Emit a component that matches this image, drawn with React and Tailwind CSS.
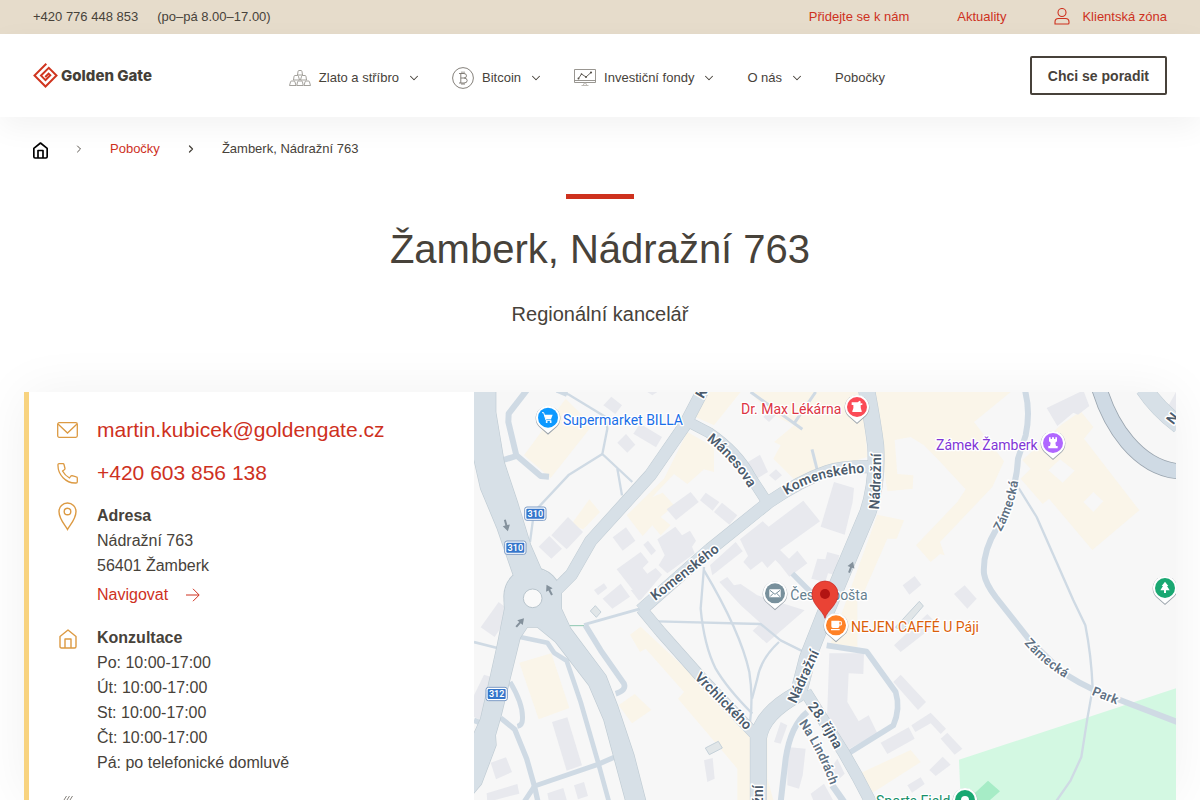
import { ChevronDown, ChevronRight } from "lucide-react";

const MAJOR_ROADS = [
  { d: "M250 590 L292 548 L350 447 L465 320 L530 248 L632 100 L684 0", w: 36 },
  { d: "M640 88 L705 122 Q790 180 830 255 L882 335", w: 30 },
  { d: "M500 655 L708 472 L885 330 Q980 265 1060 238 Q1110 222 1200 225", w: 36 },
  { d: "M502 650 L560 720 L680 855 L842 1026", w: 32 },
  { d: "M995 900 L1108 1080 L1150 1154 L1190 1230", w: 34 },
  { d: "M1178 -5 Q1196 90 1205 160 Q1212 270 1182 360 L1108 535 Q1050 670 1000 800 L973 905 Q862 965 853 1040 L853 1230", w: 48 },
  { d: "M2010 -10 Q2050 50 2116 100", w: 50 },
];

const ROAD_SHAPES = [
  "M-5 -5 H65 V60 L90 210 L130 330 L170 460 L205 540 L237 556 L262 600 V650 L290 710 L395 850 L430 940 L480 1090 L516 1230 H456 L390 985 L345 880 L245 750 L190 705 H160 L138 738 L108 860 L80 975 L64 1030 L66 1060 L22 1176 L-5 1208 V1036 L20 980 L50 850 L70 760 L92 650 Q85 590 120 555 L70 410 L20 290 L-5 180 Z",
];

const MINOR_ROADS = [
  { d: "M158 -5 L104 65 L103 90 L127 190 L200 252 L225 254", w: 18 },
  { d: "M88 204 L127 192", w: 18 },
  { d: "M240 -5 L285 8 L395 75 L400 110 L385 186 L475 270", w: 7 },
  { d: "M385 186 L285 248 L180 360 L168 450", w: 7 },
  { d: "M430 230 L444 310", w: 7 },
  { d: "M250 -8 L280 5", w: 20 },
  { d: "M330 698 L500 650", w: 9 },
  { d: "M334 700 L380 775 L450 875 Q458 895 425 905", w: 17 },
  { d: "M550 688 L860 696 L920 745 L1000 785", w: 7 },
  { d: "M690 525 L680 650 Q690 760 725 830 Q760 890 835 965", w: 7 },
  { d: "M690 535 Q800 720 826 840 Q838 920 828 990", w: 7 },
  { d: "M915 750 Q860 800 850 860 L834 920", w: 7 },
  { d: "M0 750 L70 768", w: 8 },
  { d: "M138 735 L220 752 L240 782 L278 806 L320 930 L372 1110 L405 1230", w: 14 },
  { d: "M108 870 Q150 940 145 985 Q145 1000 130 1003", w: 15 },
  { d: "M0 985 L18 992 M80 978 L122 1012 L158 1100 L182 1185 L192 1230", w: 16 },
  { d: "M150 1230 L182 1182 L372 1117 L425 1094", w: 15 },
  { d: "M1058 760 L1178 779 L1265 900 Q1280 950 1258 1000 L1123 1084", w: 17 },
  { d: "M1000 960 Q950 1000 935 1100 L920 1230", w: 18 },
  { d: "M1075 1180 L1110 1230", w: 20 },
  { d: "M955 545 L1010 600", w: 16 },
  { d: "M830 0 L985 112 M962 92 L1025 0", w: 9 },
  { d: "M1014 172 L1030 235", w: 9 },
  { d: "M1653 -5 Q1670 60 1655 130 L1632 200 Q1628 300 1568 410 Q1525 480 1530 545 Q1535 575 1565 615 L1663 739 Q1730 810 1778 849 Q1850 895 1938 924 L2110 990", w: 18 },
  { d: "M1634 288 L1688 375 L1798 625 L1834 700 Q1852 790 1856 890 L1840 980 L1822 1095 L1790 1165 L1745 1230", w: 7 },
];

const BUILDINGS = [
  "388,40 412,14 444,40 424,66",
  "430,152 456,126 484,158 460,182",
  "478,125 498,95 564,135 546,166",
  "520,0 535,10 550,0",
  "232,430 282,375 327,420 278,472",
  "194,464 226,432 264,470 232,500",
  "578,352 650,300 674,330 606,384",
  "678,325 695,302 736,330 716,356",
  "720,360 744,332 790,370 766,398",
  "416,436 456,406 484,446 446,476",
  "508,458 522,446 546,476 532,490",
  "550,442 604,404 624,430 648,416 666,446 654,464 662,484 580,544 554,520 572,490",
  "428,532 500,480 524,510 506,528 520,545 545,528 564,548 500,624",
  "360,594 390,574 400,588 372,610",
  "386,620 440,575 468,614 415,650",
  "470,594 525,590 495,626",
  "20,706 74,630 112,660 62,735",
  "0,910 30,848 62,858 20,985 0,975",
  "234,990 280,976 324,1120 278,1136",
  "50,1112 96,1096 114,1140 66,1162",
  "38,1204 130,1176 136,1205 40,1230",
  "220,1204 268,1188 280,1230 225,1230",
  "300,1180 330,1170 342,1212 312,1222",
  "690,1105 716,1098 722,1160 700,1170",
  "822,210 858,188 882,240 845,262",
  "885,250 906,232 924,250 904,266",
  "868,75 895,45 915,60 885,90",
  "798,442 866,388 884,404 988,326 1038,388 918,474 945,500 970,476 1000,514 946,554 918,518 904,504 880,528 864,508 830,534 808,510 822,492",
  "1080,270 1140,288 1136,330 1112,428 1040,404",
  "1012,560 1030,500 1054,502 1060,480 1096,490 1082,548 1062,544 1054,570",
  "708,520 785,450 806,478 715,550",
  "736,570 760,555 780,580 800,576 850,610 992,655 878,754 836,716 860,694 800,640",
  "1066,784 1170,784 1168,846 1124,844 1120,930 1154,988 1184,970 1210,1024 1120,1074 1058,1006",
  "1258,870 1280,848 1356,930 1332,954",
  "1220,1052 1304,1006 1322,1040 1240,1086",
  "1312,1000 1370,962 1416,1010 1400,1026 1370,994 1324,1020",
  "1400,1040 1420,1022 1465,1070 1442,1088",
  "1366,1134 1406,1094 1430,1118 1385,1152",
  "1300,1180 1340,1156 1352,1176 1314,1202",
  "1260,760 1360,666 1388,695 1280,780",
  "1286,580 1322,552 1342,578 1306,608",
  "900,1050 920,990 940,1000 920,1055",
  "940,1065 995,1070 986,1150 975,1190 940,1180",
  "1060,1145 1090,1100 1112,1145 1086,1170",
  "1010,1205 1050,1175 1080,1230 1020,1230",
  "1440,606 1472,580 1508,620 1480,650",
  "1718,48 1828,-5 1846,42 1812,68 1798,62 1750,102",
  "2084,40 2106,0 2106,60",
];

const SHOPS = [
  "150,190 275,20 355,100 230,258",
  "290,400 346,322 378,360 328,412",
  "458,370 570,260 640,120 720,165 720,240 690,232 640,276 600,246 534,316 566,302 600,340 560,375 590,400 560,430 535,400 506,432",
  "664,75 690,0 830,0 880,60 960,100 900,150 920,160 898,200 960,262 1100,220 1180,195 1165,0 800,0 720,100",
  "1195,0 1610,0 1500,90 1590,208 1555,285 1398,450 1412,490 1398,486 1370,510 1326,460 1450,330 1475,292 1390,200 1350,160 1310,135 1262,144 1270,246 1318,250 1316,290 1240,298",
  "1210,368 1290,385 1268,440 1240,440 1170,600 1128,600 1150,620 1150,765 1070,755",
  "1640,260 1670,230 1645,205 1760,100 1820,58 1858,105 1830,140 1996,355 1855,474 1725,320 1706,336",
  "136,812 232,784 286,948 194,982",
  "468,728 500,704 850,1030 880,1034 880,1160 900,1230 790,1230 790,1130 690,1012 612,920 630,900 515,770 498,780",
  "434,940 482,906 532,954 474,994",
  "1155,1145 1310,1074 1340,1110 1190,1206",
];

// text paths for street names, so the letters follow the road
const STREETS = [
  { id: "st-komenskeho-1", name: "Komenského", d: "M544 627 L780 443" },
  { id: "st-komenskeho-2", name: "Komenského", d: "M938 310 Q1040 244 1190 242" },
  { id: "st-manesova", name: "Mánesova", d: "M697 144 Q776 205 826 290" },
  { id: "st-nadrazni-1", name: "Nádražní", d: "M1214 353 Q1222 280 1221 160" },
  { id: "st-nadrazni-2", name: "Nádražní", d: "M966 936 L1046 760" },
  { id: "st-nadrazni-3", name: "žní", d: "M866 1236 V1120" },
  { id: "st-vrchlickeho", name: "Vrchlického", d: "M660 858 L838 1038" },
  { id: "st-rijna", name: "28. října", d: "M1000 944 Q1052 1008 1095 1100" },
  { id: "st-lindrach", name: "Na Lindrách", d: "M974 994 Q1036 1082 1076 1200", thin: true },
  { id: "st-zamecka-1", name: "Zámecká", d: "M1580 420 Q1626 340 1636 240", thin: true },
  { id: "st-zamecka-2", name: "Zámecká", d: "M1650 754 Q1710 825 1810 880", thin: true },
  { id: "st-park", name: "Park", d: "M1852 908 L1970 954", thin: true },
  { id: "st-top", name: "K", d: "M688 22 L728 -48" },
  { id: "st-right", name: "N", d: "M2098 100 L2190 -20" },
];

const PLACES = [
  { name: "Supermarket BILLA", x: 267, y: 98, px: 222, py: 77, color: "#1a6fe8", pin: "#0d99ff", icon: "cart" },
  { name: "Dr. Max Lékárna", x: 801, y: 66, px: 1149, py: 45, color: "#dc3543", pin: "#fb4b57", icon: "pharmacy" },
  { name: "Zámek Žamberk", x: 1386, y: 174, px: 1737, py: 153, color: "#8136d6", pin: "#b067ff", icon: "castle" },
  { name: "Česká pošta", x: 949, y: 624, px: 903, py: 604, color: "#65808f", pin: "#78909c", icon: "mail" },
  { name: "NEJEN CAFFÉ U Páji", x: 1131, y: 720, px: 1086, py: 700, color: "#db5f0b", pin: "#ff8126", icon: "cup" },
  { name: "Sports Field", x: 1206, y: 1243, px: 1473, py: 1224, color: "#15906a", pin: "#1aa872", icon: "dot" },
  { name: "", x: 0, y: 0, px: 2073, py: 588, color: "#15906a", pin: "#1aa872", icon: "tree" },
];

const SHIELDS = [
  { label: "310", x: 152, y: 345 },
  { label: "310", x: 92, y: 447 },
  { label: "312", x: 36, y: 886 },
];

const ARROWS = [
  "translate(97 400) rotate(165)",
  "translate(226 594) rotate(-28)",
  "translate(138 692) rotate(42)",
  "translate(1131 526) rotate(20)",
];

const HOURS = [
  "Po: 10:00-17:00",
  "Út: 10:00-17:00",
  "St: 10:00-17:00",
  "Čt: 10:00-17:00",
  "Pá: po telefonické domluvě",
];

function PlaceIcon({ name }) {
  switch (name) {
    case "cart":
      return (
        <>
          <path d="M-12 -9 H14 L9 5 H-6 Z" fill="#fff" />
          <path d="M-18 -15 H-13 L-6 8 H10" fill="none" stroke="#fff" strokeWidth="3" />
          <circle cx="-4" cy="13" r="3" fill="#fff" />
          <circle cx="8" cy="13" r="3" fill="#fff" />
        </>
      );
    case "pharmacy":
      return <path d="M-16 -14 H2 L8 -19 L12 -15 L9 -11 H16 V-6 H11 Q10 4 14 12 V15 H-14 V12 Q-9 4 -11 -6 H-16 Z" fill="#fff" />;
    case "castle":
      return <path d="M-12 -17 H-7 V-12 H-3 V-17 H3 V-12 H7 V-17 H12 V-5 L7 -1 L9 9 H14 V16 H-14 V9 H-9 L-7 -1 L-12 -5 Z" fill="#fff" />;
    case "mail":
      return (
        <>
          <rect x="-17" y="-12" width="34" height="24" rx="2" fill="#fff" />
          <path d="M-15 -9 L0 3 L15 -9 M-15 10 L-5 0 M15 10 L5 0" fill="none" stroke="#78909c" strokeWidth="3" />
        </>
      );
    case "cup":
      return (
        <>
          <path d="M-14 -14 H10 V3 Q10 8 5 8 H-9 Q-14 8 -14 3 Z M-15 11 H11 V15 H-15 Z" fill="#fff" />
          <path d="M9 -11 H16 V-1 H9" fill="none" stroke="#fff" strokeWidth="3" />
        </>
      );
    case "tree":
      return <path d="M0 -19 L10 -6 H6 L14 7 H3 V15 H-3 V7 H-14 L-6 -6 H-10 Z" fill="#fff" />;
    default:
      return <circle r="12" fill="#fff" />;
  }
}

function BranchMap() {
  return (
    <svg
      className="block h-full w-full"
      viewBox="0 0 2106 1224"
      preserveAspectRatio="xMinYMin slice"
      role="img"
      aria-label="Mapa pobočky"
    >
      <rect width="2106" height="1224" fill="#f7f7f7" />
      <g fill="#faf5e9">
        {SHOPS.map((p) => (
          <polygon key={p} points={p} />
        ))}
      </g>
      <g fill="#f7f7f7">
        <path d="M1723 235 L1758 202 L1802 236 L1766 272 Z M1828 330 L1858 300 L1888 328 L1858 360 Z" />
      </g>
      <path d="M1455 1103 L2106 889 V1224 H1460 Z" fill="#d3f8e2" />
      <path d="M1500 1205 L1542 1166 L1578 1198 L1548 1224 H1500 Z" fill="#a6ecc6" />
      <g fill="#e8e9ee">
        {BUILDINGS.map((p) => (
          <polygon key={p} points={p} />
        ))}
      </g>
      <g fill="#e1e6e8" stroke="#c5d1d9" strokeWidth="3">
        <path d="M349 657 L364 641 L381 660 L367 676 Z M694 1068 L733 1048 L745 1068 L706 1088 Z M1264 706 L1336 628 L1348 642 L1284 716 Z" />
      </g>
      <g fill="none" stroke="#cfdae4" strokeLinejoin="round">
        {MINOR_ROADS.map((r) => (
          <path key={r.d} d={r.d} strokeWidth={r.w} />
        ))}
      </g>
      <path d="M282 701 H330" stroke="#8cc7b0" strokeWidth="3" />
      <g fill="none" stroke="#c0ccd4" strokeLinejoin="round">
        {MAJOR_ROADS.map((r) => (
          <path key={r.d} d={r.d} strokeWidth={r.w + 3} />
        ))}
        {ROAD_SHAPES.map((d) => (
          <path key={d} d={d} strokeWidth="4" />
        ))}
        <circle cx="176" cy="613" r="86" strokeWidth="4" />
      </g>
      <g fill="none" stroke="#d7e0e7" strokeLinejoin="round">
        {MAJOR_ROADS.map((r) => (
          <path key={r.d} d={r.d} strokeWidth={r.w} />
        ))}
      </g>
      <g fill="#d7e0e7">
        {ROAD_SHAPES.map((d) => (
          <path key={d} d={d} />
        ))}
        <circle cx="176" cy="613" r="85" />
      </g>
      <circle cx="176" cy="619" r="28" fill="#f9f9f9" stroke="#b9c5cd" strokeWidth="3" />

      <path d="M1876 -10 Q1905 85 1960 150 Q2030 232 2116 238" fill="none" stroke="#9aa5af" strokeWidth="48" />
      <path d="M1876 -10 Q1905 85 1960 150 Q2030 232 2116 238" fill="none" stroke="#cfdae4" strokeWidth="43" />

      <g fill="#84919c">
        {ARROWS.map((t) => (
          <path key={t} transform={t} d="M0 -18 L11 0 H3 V17 H-3 V0 H-11 Z" />
        ))}
      </g>

      <defs>
        {STREETS.map((s) => (
          <path key={s.id} id={s.id} d={s.d} />
        ))}
      </defs>
      <g fontFamily="Roboto, sans-serif" paintOrder="stroke" stroke="#fff" strokeWidth="9" strokeLinejoin="round">
        {STREETS.map((s) => (
          <text
            key={s.id}
            fontSize={s.thin ? 39 : 42}
            fontWeight="600"
            fill={s.thin ? "#5f7183" : "#4b5b6c"}
          >
            <textPath href={`#${s.id}`}>{s.name}</textPath>
          </text>
        ))}
      </g>

      {SHIELDS.map((s) => (
        <g key={`${s.x}-${s.y}`}>
          <rect x={s.x} y={s.y} width="64" height="40" rx="7" fill="#fff" stroke="#7d9cc6" strokeWidth="3" />
          <rect x={s.x + 5} y={s.y + 5} width="54" height="30" rx="3" fill="#3576cb" />
          <text x={s.x + 32} y={s.y + 30} textAnchor="middle" fontSize="27" fontWeight="600" fontFamily="Roboto, sans-serif" fill="#fff">
            {s.label}
          </text>
        </g>
      ))}

      {PLACES.map((p) => (
        <g key={p.icon} fontFamily="Roboto, sans-serif" fontSize="42">
          <text x={p.x} y={p.y} fill={p.color} stroke="#fff" strokeWidth="8" strokeLinejoin="round" paintOrder="stroke">
            {p.name}
          </text>
          <g transform={`translate(${p.px} ${p.py})`}>
            <path d="M0 51 L-27 27 A37 37 0 1 1 27 27 Z" fill="#9aa3ab" />
            <path d="M0 47 L-26 25 A36 36 0 1 1 26 25 Z" fill="#fff" />
            <circle r="30" fill={p.pin} />
            <PlaceIcon name={p.icon} />
          </g>
        </g>
      ))}

      <path
        d="M1053 679 C1047 655 1014 640 1014 606 A39 39 0 1 1 1092 606 C1092 640 1059 655 1053 679 Z"
        fill="#ea4335"
        stroke="#c5221f"
        strokeWidth="2"
      />
      <circle cx="1053" cy="606" r="15" fill="#b31412" />
    </svg>
  );
}

function GoldIcon() {
  return (
    <svg width="22" height="16" viewBox="0 0 22 16" fill="none" stroke="#8d8a84" strokeWidth=".8" strokeLinejoin="round">
      <path d="M8.5 5 L9 1.5 Q9.2 .5 10 .5 H12 Q12.800 .5 13 1.500 L13.500 5 Z" />
      <path d="M4.500 10 L5 6.500 Q5.200 5.500 6 5.500 H8.500 Q9.300 5.500 9.500 6.500 L10.500 10 Z M11.500 10 L12.500 6.500 Q12.700 5.500 13.500 5.500 H16 Q16.800 5.500 17 6.500 L17.500 10 Z" />
      <path d="M.5 15.500 L1.500 12 Q1.700 11 2.500 11 H5 Q5.800 11 6 12 L7 15.500 Z M7.800 15.500 L8.500 12 Q8.700 11 9.500 11 H12.500 Q13.300 11 13.500 12 L14.200 15.500 Z M15 15.500 L16 12 Q16.200 11 17 11 H19.500 Q20.300 11 20.500 12 L21.500 15.500 Z" />
    </svg>
  );
}

function BitcoinIcon() {
  return (
    <svg width="22" height="22" viewBox="0 0 22 22" fill="none" stroke="#77736c" strokeWidth=".9">
      <circle cx="11" cy="11" r="10.400" />
      <path d="M7 6.500 H12 Q14.500 6.700 14.500 8.800 Q14.500 11 12 11 H8.800 M12 11 Q15.200 11.200 15.200 13.500 Q15.200 16 12 16 H7 M8.800 6.500 V16 M10 4.500 V6.500 M12 4.500 V6.500 M10 16 V18 M12 16 V18" />
    </svg>
  );
}

function FundsIcon() {
  return (
    <svg width="22" height="17" viewBox="0 0 22 17" fill="none" stroke="#8d8a84" strokeWidth=".9">
      <path d="M.5 .5 H21.500 V13.500 H.5 Z M.5 11.500 H21.500" />
      <path d="M4.500 9.500 L7.500 5 L12 8 L17 3.500" stroke="#555049" />
      <path d="M9.500 16 Q9.500 14 11 14 T12.500 16 M7.500 16.500 H14.500" stroke="#b5b2ad" />
      <g fill="#555049" stroke="none">
        <circle cx="4.500" cy="9.500" r="1" />
        <circle cx="7.500" cy="5" r=".8" />
        <circle cx="12" cy="8" r="1" />
        <circle cx="17" cy="3.500" r="1.100" />
      </g>
    </svg>
  );
}

function HomeIcon({ className }) {
  return (
    <svg className={className} viewBox="0 0 18 20" fill="none" stroke="currentColor" strokeLinejoin="round">
      <path d="M1 7.500 L9 1 L17 7.500 V17.500 Q17 19 15.500 19 H2.500 Q1 19 1 17.500 Z" />
      <path d="M6 19 V10 H12 V19" />
    </svg>
  );
}

function Logo() {
  return (
    <a href="#" className="flex items-center gap-[3px] text-[#443f38]">
      <svg width="25" height="25" viewBox="0 0 25 25" fill="none" stroke="#d0351f" strokeWidth="2">
        <path d="M13.300 .8 L1.500 12.500 L12.500 23.500 L23.500 12.500 L15.800 4.800 L8 12.600 L12.500 17.100 L17.300 12.300 L15.600 10.600 L12.200 14" />
      </svg>
      <span className="font-[Inter,sans-serif] text-[15px] leading-6 font-extrabold">Golden Gate</span>
    </a>
  );
}

const NAV_ITEMS = [
  { label: "Zlato a stříbro", Icon: GoldIcon, menu: true },
  { label: "Bitcoin", Icon: BitcoinIcon, menu: true },
  { label: "Investiční fondy", Icon: FundsIcon, menu: true },
  { label: "O nás", menu: true },
  { label: "Pobočky" },
];

function TopBar() {
  return (
    <div className="flex h-[34px] items-center justify-between bg-[#e6dccb] px-[33px]">
      <div className="flex gap-[19px]">
        <a href="tel:+420776448853">+420 776 448 853</a>
        <span>(po–pá 8.00–17.00)</span>
      </div>
      <div className="flex items-center gap-12 text-[#ce311e]">
        <a href="#">Přidejte se k nám</a>
        <a href="#">Aktuality</a>
        <a href="#" className="flex items-center gap-3">
          <svg width="16" height="18" viewBox="0 0 16 18" fill="none" stroke="currentColor" strokeWidth="1.100">
            <circle cx="8" cy="4.500" r="4" />
            <path d="M1 16 V14 Q1 10.500 4.500 10.500 H11.500 Q15 10.500 15 14 V15 Q15 16 14 16 Z" />
          </svg>
          Klientská zóna
        </a>
      </div>
    </div>
  );
}

function Header() {
  return (
    <header className="relative z-10 flex h-[83px] shrink-0 items-center justify-between bg-white px-[33px] shadow-[0_10px_30px_rgba(0,0,0,0.05)]">
      <Logo />
      <nav className="flex items-center gap-[33px] pt-1 pr-2">
        {NAV_ITEMS.map(({ label, Icon, menu }) => (
          <a key={label} href="#" className="flex items-center gap-2">
            {Icon && <Icon />}
            {label}
            {menu && <ChevronDown className="-mr-0.5 size-3.5" strokeWidth={1.8} />}
          </a>
        ))}
      </nav>
      <button
        type="button"
        className="h-[39px] rounded-xs border-2 border-[#47413a] px-4 text-sm font-bold text-[#47413a]"
      >
        Chci se poradit
      </button>
    </header>
  );
}

function Breadcrumbs() {
  return (
    <nav aria-label="Drobečková navigace" className="flex h-16 items-center gap-[25px] px-[33px]">
      <a href="#" aria-label="Domů" className="pt-0.5 text-black">
        <HomeIcon className="h-[17px] w-[15px] stroke-2" />
      </a>
      <ChevronRight className="size-3" strokeWidth={1.8} />
      <a href="#" className="text-[#ce311e]">Pobočky</a>
      <ChevronRight className="size-3" strokeWidth={2.5} />
      <span>Žamberk, Nádražní 763</span>
    </nav>
  );
}

function ContactRow({ icon, children }) {
  return (
    <div className="flex gap-[19px]">
      <div className="flex w-[21px] shrink-0 justify-center text-[#dc9a43]">{icon}</div>
      <div>{children}</div>
    </div>
  );
}

function Contacts() {
  return (
    <div className="flex w-[450px] shrink-0 flex-col gap-[15px] border-l-5 border-[#f8d37f] bg-white pt-6 pl-7 text-base leading-[25px]">
      <ContactRow
        icon={
          <svg className="mt-1.5" width="21" height="16" viewBox="0 0 21 16" fill="none" stroke="currentColor" strokeWidth="1.300">
            <rect x=".7" y=".7" width="19.600" height="14.600" rx="1.500" />
            <path d="M1 2 L10.500 11 L20 2" />
          </svg>
        }
      >
        <a href="mailto:martin.kubicek@goldengate.cz" className="block text-[21px] leading-7 text-[#ce311e]">
          martin.kubicek@goldengate.cz
        </a>
      </ContactRow>
      <ContactRow
        icon={
          <svg className="mt-1" width="21" height="21" viewBox="0 0 21 21" fill="none" stroke="currentColor" strokeWidth="1.300" strokeLinejoin="round">
            <path d="M1 1.500 Q1 .7 2 .7 H6 Q6.800 .7 7 1.500 L8 5.500 Q8 6.500 7 7 L5.500 8 Q8 12.500 12.500 15 L13.500 13.500 Q14 12.700 15 12.700 L19.300 13.800 Q20.300 14 20.300 15 V18.800 Q20.300 20 19 20 C9 20.500 .5 11.500 1 1.500 Z" />
          </svg>
        }
      >
        <a href="tel:+420603856138" className="block text-[21px] leading-7 text-[#ce311e]">
          +420 603 856 138
        </a>
      </ContactRow>
      <ContactRow
        icon={
          <svg width="19" height="29" viewBox="0 0 19 29" fill="none" stroke="currentColor" strokeWidth="1.400">
            <path d="M9.500 27.500 C7 23 1 17 1 9.500 A8.500 8.500 0 0 1 18 9.500 C18 17 12 23 9.500 27.500 Z" />
            <circle cx="9.500" cy="9.500" r="3.300" />
          </svg>
        }
      >
        <div className="pt-px pb-[3px]">
          <h2 className="font-bold">Adresa</h2>
          <p>Nádražní 763</p>
          <p>56401 Žamberk</p>
          <a href="#" className="mt-1 flex items-center gap-[18px] text-[#ce311e]">
            Navigovat
            <svg width="14" height="14" viewBox="0 0 14 14" fill="none" stroke="currentColor">
              <path d="M0 7 H13 M7 .8 L13.200 7 L7 13.200" />
            </svg>
          </a>
        </div>
      </ContactRow>
      <ContactRow icon={<HomeIcon className="mt-1 h-5 w-[18px] stroke-[1.4]" />}>
        <div className="pb-1">
          <h2 className="font-bold">Konzultace</h2>
          {HOURS.map((line) => (
            <p key={line}>{line}</p>
          ))}
        </div>
      </ContactRow>
      <ContactRow
        icon={
          <svg className="mt-0.5" width="18" height="20" viewBox="0 0 18 20" fill="none" stroke="#77736c" strokeWidth=".9">
            <path d="M5 4 L7.500 0 M8 4 L10.500 0 M11 4 L13.500 0 M2 6 H15 V16 H2 Z" />
          </svg>
        }
      />
    </div>
  );
}

export default function App() {
  return (
    <div className="flex h-screen flex-col overflow-hidden bg-white font-['Liberation_Sans',Arial,sans-serif] text-[13px] leading-5 text-[#47423a]">
      <TopBar />
      <Header />
      <Breadcrumbs />
      <main className="flex min-h-0 flex-1 flex-col">
        <div className="flex flex-col items-center pt-[13px] pb-16">
          <span className="h-[5px] w-[68px] bg-[#ce311e]" />
          <h1 className="mt-6 text-[40px] leading-[52px]">Žamberk, Nádražní 763</h1>
          <p className="mt-[25px] text-xl leading-7">Regionální kancelář</p>
        </div>
        <section className="mx-6 flex min-h-0 flex-1 shadow-[0_0_50px_rgba(0,0,0,0.06)]">
          <Contacts />
          <div className="min-w-0 flex-1">
            <BranchMap />
          </div>
        </section>
      </main>
    </div>
  );
}
